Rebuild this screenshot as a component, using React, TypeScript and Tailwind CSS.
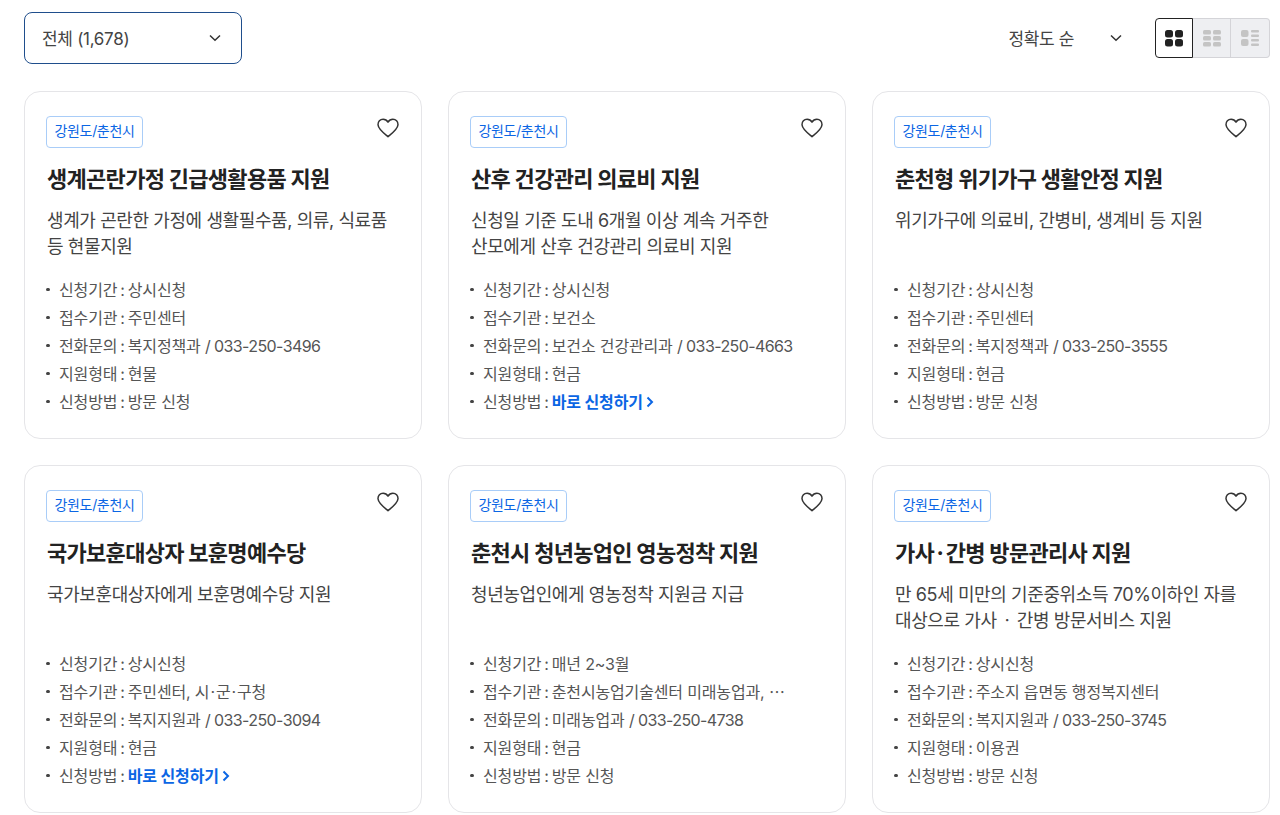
import React from "react";

type Card = {
  title: React.ReactNode;
  desc: React.ReactNode;
  period: string;
  org: React.ReactNode;
  dept: string;
  phone: string;
  kind: string;
  method: string | null;
};

const Dot = () => <span className="mx-[1px]">·</span>;

const cards: Card[] = [
  { title: "생계곤란가정 긴급생활용품 지원", desc: <>생계가 곤란한 가정에 생활필수품, 의류, 식료품<br />등 현물지원</>, period: "상시신청", org: "주민센터", dept: "복지정책과", phone: "033-250-3496", kind: "현물", method: "방문 신청" },
  { title: "산후 건강관리 의료비 지원", desc: <>신청일 기준 도내 6개월 이상 계속 거주한<br />산모에게 산후 건강관리 의료비 지원</>, period: "상시신청", org: "보건소", dept: "보건소 건강관리과", phone: "033-250-4663", kind: "현금", method: null },
  { title: "춘천형 위기가구 생활안정 지원", desc: "위기가구에 의료비, 간병비, 생계비 등 지원", period: "상시신청", org: "주민센터", dept: "복지정책과", phone: "033-250-3555", kind: "현금", method: "방문 신청" },
  { title: "국가보훈대상자 보훈명예수당", desc: "국가보훈대상자에게 보훈명예수당 지원", period: "상시신청", org: <>주민센터, 시<Dot />군<Dot />구청</>, dept: "복지지원과", phone: "033-250-3094", kind: "현금", method: null },
  { title: "춘천시 청년농업인 영농정착 지원", desc: "청년농업인에게 영농정착 지원금 지급", period: "매년 2~3월", org: "춘천시농업기술센터 미래농업과, ⋯", dept: "미래농업과", phone: "033-250-4738", kind: "현금", method: "방문 신청" },
  { title: <>가사<span className="mx-[2.5px]">·</span>간병 방문관리사 지원</>, desc: <>만 65세 미만의 기준중위소득 70%이하인 자를<br />대상으로 가사<span className="mx-[2px]">ㆍ</span>간병 방문서비스 지원</>, period: "상시신청", org: "주소지 읍면동 행정복지센터", dept: "복지지원과", phone: "033-250-3745", kind: "이용권", method: "방문 신청" },
];

function Chevron({ className }: { className?: string }) {
  return (
    <svg className={className} width="12" height="8" viewBox="0 0 12 8" fill="none">
      <path d="M1 1.5 6 6.2l5-4.7" stroke="#333" strokeWidth="1.5" />
    </svg>
  );
}

function Heart() {
  return (
    <svg width="22" height="20" viewBox="0 0 22 20" fill="none">
      <path
        d="M11 18.6C8.3 16.3 1.4 11.7 1 6.8.8 3.5 3.2 1.2 6.1 1.2c2 0 3.8 1 4.9 2.9 1.1-1.9 2.9-2.9 4.9-2.9 2.9 0 5.3 2.3 5.1 5.6-.4 4.9-7.3 9.5-10 11.8Z"
        stroke="#333"
        strokeWidth="1.5"
        strokeLinejoin="round"
      />
    </svg>
  );
}

function Row({ label, children }: { label: string; children: React.ReactNode }) {
  return (
    <li className="flex h-[28px] items-center pt-[1px] text-[16px] tracking-[-0.15px] text-[#555] whitespace-nowrap">
      <span className="ml-[22px] mr-[9.5px] h-[3.5px] w-[3.5px] rounded-full bg-[#444]" />
      <span>{label}</span>
      <span className="ml-[3px] mr-[3px]">:</span>
      {children}
    </li>
  );
}

function GridIcon({ color, wide }: { color: string; wide?: boolean }) {
  if (wide) {
    return (
      <svg width="18" height="18" viewBox="0 0 18 18" fill={color}>
        <rect x="0" y="1" width="7.5" height="7" rx="2" />
        <rect x="0" y="10" width="7.5" height="7" rx="2" />
        <rect x="10" y="1" width="8" height="2.5" rx="1" />
        <rect x="10" y="5.5" width="8" height="2.5" rx="1" />
        <rect x="10" y="10" width="8" height="2.5" rx="1" />
        <rect x="10" y="14.5" width="8" height="2.5" rx="1" />
      </svg>
    );
  }
  return (
    <svg width="18" height="18" viewBox="0 0 18 18" fill={color}>
      <rect x="0" y="1" width="8" height="7.5" rx="2.5" />
      <rect x="10" y="1" width="8" height="7.5" rx="2.5" />
      <rect x="0" y="10" width="8" height="7.5" rx="2.5" />
      <rect x="10" y="10" width="8" height="7.5" rx="2.5" />
    </svg>
  );
}

function SmallGrid() {
  return (
    <svg width="18" height="18" viewBox="0 0 18 18" fill="#c4c4c4">
      {[1, 7, 13].map((y) => (
        <React.Fragment key={y}>
          <rect x="0" y={y} width="8" height="4.5" rx="1.5" />
          <rect x="10" y={y} width="8" height="4.5" rx="1.5" />
        </React.Fragment>
      ))}
    </svg>
  );
}

export default function App() {
  return (
    <div
      className="h-[815px] w-[1280px] overflow-hidden bg-white pl-[24px] pr-[10px] pt-[12px]"
      style={{ fontFamily: 'Inter, "Noto Sans CJK KR", sans-serif' }}
    >
      <div className="flex h-[52px] items-center justify-between">
        <div className="flex h-[52px] w-[218px] items-center justify-between rounded-[8px] border border-[#1f4e8c] pl-[17px] pr-[20px] text-[17px] tracking-[-0.3px] text-[#444]">
          <span className="pt-[3px]">전체 (1,678)</span>
          <Chevron />
        </div>
        <div className="flex items-center">
          <span className="pt-[3px] text-[17px] tracking-[-0.35px] text-[#444]">정확도 순</span>
          <Chevron className="ml-[36px] mr-[33px]" />
          <div className="flex h-[40px]">
            <div className="flex w-[38px] items-center justify-center rounded-l-[4px] border-[1.5px] border-[#222] bg-white">
              <GridIcon color="#222" />
            </div>
            <div className="flex w-[38px] items-center justify-center border-y border-r border-[#d4d4d8] bg-[#eeeff2]">
              <SmallGrid />
            </div>
            <div className="flex w-[39px] items-center justify-center rounded-r-[4px] border-y border-r border-[#d4d4d8] bg-[#eeeff2]">
              <GridIcon color="#c4c4c4" wide />
            </div>
          </div>
        </div>
      </div>
      <div className="mt-[27px] grid grid-cols-3 gap-x-[26px] gap-y-[26px]">
        {cards.map((c, i) => (
          <div key={i} className="h-[348px] rounded-[16px] border border-[#e5e5e8] bg-white px-[21px] pt-[24px]">
            <div className="flex items-start justify-between">
              <span className="flex h-[32px] w-[97px] items-center justify-center rounded-[4px] border border-[#a9cdf8] pb-[3px] text-[14px] tracking-[-0.35px] text-[#0b66e4]">
                강원도/춘천시
              </span>
              <span className="mr-[1px] pt-[2px]"><Heart /></span>
            </div>
            <h3 className="ml-[1px] mt-[15px] h-[32px] text-[22px] leading-[32px] font-bold tracking-[-0.7px] text-[#222] whitespace-nowrap">
              {c.title}
            </h3>
            <p className="ml-[1px] mt-[13px] h-[52px] text-[18px] leading-[26px] tracking-[-0.4px] text-[#444] whitespace-nowrap">
              {c.desc}
            </p>
            <ul className="mt-[15px] -ml-[22px]">
              <Row label="신청기간"><span>{c.period}</span></Row>
              <Row label="접수기관"><span>{c.org}</span></Row>
              <Row label="전화문의">
                <span>
                  {c.dept} <span className="tracking-[-0.6px]">/ {c.phone}</span>
                </span>
              </Row>
              <Row label="지원형태"><span>{c.kind}</span></Row>
              <Row label="신청방법">
                {c.method ? (
                  <span>{c.method}</span>
                ) : (
                  <span className="flex items-center font-bold text-[#0b66e4]">
                    바로 신청하기
                    <svg className="ml-[3px]" width="8" height="12" viewBox="0 0 8 12" fill="none">
                      <path d="M1.5 1.5 6 6l-4.5 4.5" stroke="#0b66e4" strokeWidth="2" />
                    </svg>
                  </span>
                )}
              </Row>
            </ul>
          </div>
        ))}
      </div>
    </div>
  );
}
